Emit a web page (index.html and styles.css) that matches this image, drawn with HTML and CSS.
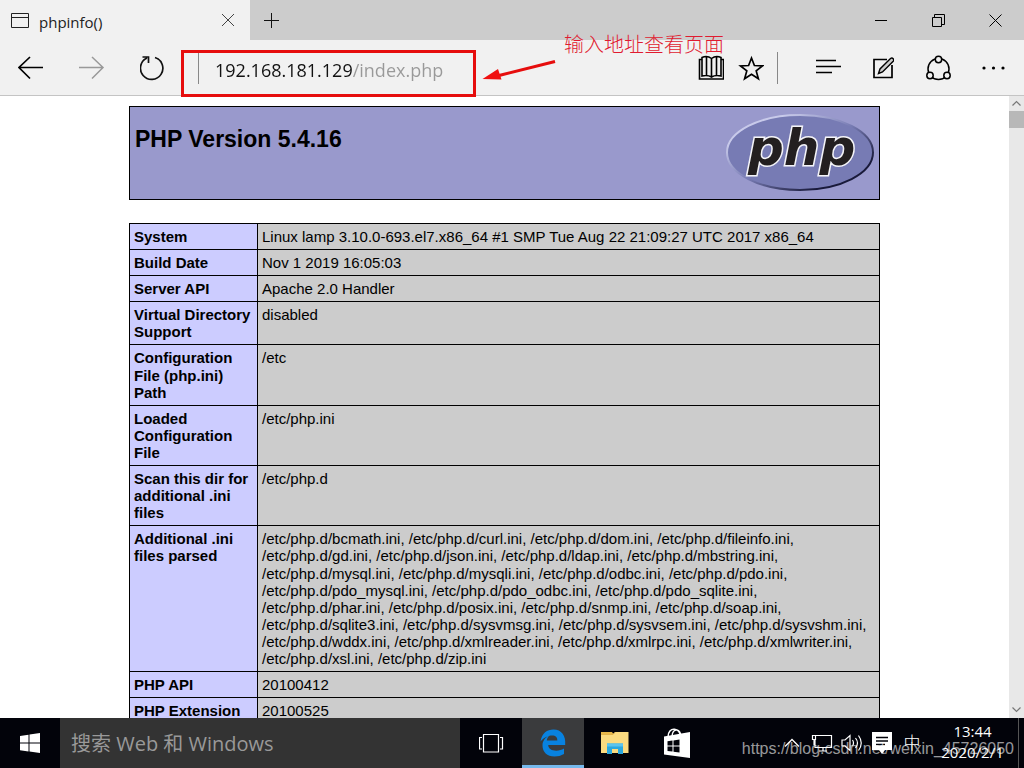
FILE: index.html
```html
<!DOCTYPE html>
<html lang="zh-CN">
<head>
<meta charset="utf-8">
<title>phpinfo()</title>
<link rel="stylesheet" href="styles.css">
</head>
<body>
<div class="titlebar">
  <div class="tab">
    <svg class="tab-icon" width="20" height="16" viewBox="10 11 20 16"><path d="M11.5 12.5h17v14h-17zM11.5 16.5h17" fill="none" stroke="#222"/></svg>
    <span class="tab-title">phpinfo()</span>
    <button class="tab-close" aria-label="Close tab"><svg width="14" height="14" viewBox="0 0 14 14"><path d="M1 1l12 12M13 1L1 13" stroke="#444" fill="none"/></svg></button>
  </div>
  <button class="tab-new" aria-label="New tab"><svg width="15" height="15" viewBox="0 0 15 15"><path d="M7.500 0v15M0 7.500h15" stroke="#111" fill="none"/></svg></button>
  <div class="window-controls">
    <button aria-label="Minimize"><svg width="13" height="13" viewBox="0 0 13 13"><path d="M0 6.500h12" stroke="#000"/></svg></button>
    <button aria-label="Restore"><svg width="13" height="13" viewBox="0 0 13 13"><path d="M.5 3.500h9v9h-9zM2.500 3.500v-3h10v10h-3" stroke="#000" fill="none"/></svg></button>
    <button aria-label="Close"><svg width="13" height="13" viewBox="0 0 13 13"><path d="M.5 .5l12 12M12.500 .5l-12 12" stroke="#000" fill="none"/></svg></button>
  </div>
</div>

<div class="toolbar">
  <button class="nav" aria-label="Back"><svg width="26" height="24" viewBox="18 56 26 24"><path d="M43 67.500H19M30 57L19 67.500L30 78.500" fill="none" stroke="#000" stroke-width="1.700"/></svg></button>
  <button class="nav" aria-label="Forward"><svg width="26" height="24" viewBox="79 56 26 24"><path d="M79 67.500h24M92 57l11 10.500L92 78.500" fill="none" stroke="#999" stroke-width="1.500"/></svg></button>
  <button class="nav" aria-label="Refresh"><svg width="26" height="26" viewBox="140 55 26 26"><path d="M155 57.500A11.200 11.200 0 1 1 147 58M142.500 57h6v6" fill="none" stroke="#111" stroke-width="1.700"/></svg></button>
  <div class="address">
    <input class="address-input" type="text" aria-label="Address" value="192.168.181.129/index.php">
    <span class="highlight"></span>
  </div>
  <button class="small" aria-label="Reading view"><svg width="26" height="26" viewBox="698 56 26 26"><path d="M702 60.500h-2.500v19.500h24V60.500H721M702 58.500c3-1.500 7-1 9.500 1 2.500-2 6.500-2.500 9.500-1V77c-4-1-7-.5-9.500 1-2.500-1.500-5.500-2-9.500-1zM711.500 59v19M706.500 58v18.500M716.500 58v18.500" fill="none" stroke="#000" stroke-width="1.600"/></svg></button>
  <button class="small" aria-label="Add to favorites"><svg width="26" height="26" viewBox="738 56 26 26"><path d="M751.500 59l2.900 7.500 8.100 .4-6.300 5 2.200 7.800-6.900-4.500-6.900 4.500 2.200-7.800-6.300-5 8.100-.4z" fill="none" stroke="#000" stroke-width="1.700"/></svg></button>
  <span class="divider"></span>
  <button class="menu" aria-label="Hub"><svg width="26" height="20" viewBox="815 58 26 20"><path d="M816 60.500h20M816 66.500h25M816 72.500h16" stroke="#000" stroke-width="1.500"/></svg></button>
  <button class="menu" aria-label="Web note"><svg width="22" height="24" viewBox="872 55 22 24"><path d="M887 58.500h-13v18h18V64" fill="none" stroke="#000" stroke-width="1.700"/><path d="M878.500 72.500l1.500-4.500 10.500-10.500q1.500-1 2.700 .3 1 1.200 0 2.500L882.500 71z" fill="#ccc" stroke="#000" stroke-width="1.400"/></svg></button>
  <button class="menu" aria-label="Share"><svg width="26" height="26" viewBox="925 54 26 26"><circle cx="938.500" cy="68" r="10.500" fill="none" stroke="#000" stroke-width="1.500"/><g fill="#f1f1f1" stroke="#000" stroke-width="1.500"><circle cx="938.500" cy="58.500" r="3.200"/><circle cx="930" cy="74.500" r="3.200"/><circle cx="947" cy="74.500" r="3.200"/></g></svg></button>
  <button class="menu" aria-label="More"><svg width="24" height="4" viewBox="0 0 24 4"><g fill="#000"><circle cx="3" cy="2" r="1.600"/><circle cx="12.500" cy="2" r="1.600"/><circle cx="22" cy="2" r="1.600"/></g></svg></button>
  <div class="note">
    <svg width="74" height="24" viewBox="481 59 74 24"><path d="M554 61.500L498 75.500" stroke="#e60d0d" stroke-width="3"/><path d="M481.500 79l15.500-10 3.500 10.500z" fill="#f01010"/></svg>
    <span>输入地址查看页面</span>
  </div>
</div>

<div class="viewport">
  <main class="page">
    <header class="banner">
      <h1>PHP Version 5.4.16</h1>
      <svg class="logo" width="150" height="80" viewBox="725 113 150 80" role="img" aria-label="php">
        <defs>
          <linearGradient id="rim" x1="0" y1="0" x2="1" y2="1"><stop offset=".2" stop-color="#c8caea"/><stop offset=".5" stop-color="#777bb3"/><stop offset=".8" stop-color="#191a3a"/></linearGradient>
        </defs>
        <ellipse cx="800" cy="152.500" rx="73" ry="37.500" fill="#777bb4" stroke="url(#rim)" stroke-width="2"/>
        <text class="logo-text" x="748" y="165">php</text>
      </svg>
    </header>
    <table class="info">
      <tr><th scope="row">System</th><td>Linux lamp 3.10.0-693.el7.x86_64 #1 SMP Tue Aug 22 21:09:27 UTC 2017 x86_64</td></tr>
      <tr><th scope="row">Build Date</th><td>Nov 1 2019 16:05:03</td></tr>
      <tr><th scope="row">Server API</th><td>Apache 2.0 Handler</td></tr>
      <tr><th scope="row">Virtual Directory Support</th><td>disabled</td></tr>
      <tr><th scope="row">Configuration File (php.ini) Path</th><td>/etc</td></tr>
      <tr><th scope="row">Loaded Configuration File</th><td>/etc/php.ini</td></tr>
      <tr><th scope="row">Scan this dir for additional .ini files</th><td>/etc/php.d</td></tr>
      <tr><th scope="row">Additional .ini files parsed</th><td>/etc/php.d/bcmath.ini, /etc/php.d/curl.ini, /etc/php.d/dom.ini, /etc/php.d/fileinfo.ini, /etc/php.d/gd.ini, /etc/php.d/json.ini, /etc/php.d/ldap.ini, /etc/php.d/mbstring.ini, /etc/php.d/mysql.ini, /etc/php.d/mysqli.ini, /etc/php.d/odbc.ini, /etc/php.d/pdo.ini, /etc/php.d/pdo_mysql.ini, /etc/php.d/pdo_odbc.ini, /etc/php.d/pdo_sqlite.ini, /etc/php.d/phar.ini, /etc/php.d/posix.ini, /etc/php.d/snmp.ini, /etc/php.d/soap.ini, /etc/php.d/sqlite3.ini, /etc/php.d/sysvmsg.ini, /etc/php.d/sysvsem.ini, /etc/php.d/sysvshm.ini, /etc/php.d/wddx.ini, /etc/php.d/xmlreader.ini, /etc/php.d/xmlrpc.ini, /etc/php.d/xmlwriter.ini, /etc/php.d/xsl.ini, /etc/php.d/zip.ini</td></tr>
      <tr><th scope="row">PHP API</th><td>20100412</td></tr>
      <tr><th scope="row">PHP Extension</th><td>20100525</td></tr>
    </table>
  </main>
  <div class="scrollbar">
    <svg width="15" height="15" viewBox="0 0 15 15"><path d="M3.500 9.500l4-4 4 4" fill="none" stroke="#777" stroke-width="1.200"/></svg>
    <span class="thumb"></span>
    <svg width="15" height="17" viewBox="0 0 15 17"><path d="M3.500 6.500l4 4 4-4" fill="none" stroke="#777" stroke-width="1.200"/></svg>
  </div>
</div>

<div class="taskbar">
  <button class="start" aria-label="Start"><svg width="20" height="20" viewBox="0 0 20 20"><path d="M0 2.900L8.500 1.700V9.500H0zM9.500 1.500L20 0v9.500H9.500zM0 10.500h8.500v7.900L0 17.200zM9.500 10.500H20V20L9.500 18.600z" fill="#fff"/></svg></button>
  <input class="search" type="text" aria-label="搜索" placeholder="搜索 Web 和 Windows">
  <button class="app" aria-label="Task view"><svg width="25" height="19" viewBox="0 0 25 19"><path d="M4.500 .5h15v17.500h-15zM3 3.500H.5v11.500H3M21 3.500h2.500v11.500H21" fill="none" stroke="#fff" stroke-width="1.200"/></svg></button>
  <button class="app active" aria-label="Microsoft Edge"><svg width="26" height="28" viewBox="540 729 26 28"><path d="M540.500 741.500C542 733 547 729.500 553.500 729.500c8 0 12.500 6 11.700 15.500h-17c.3 4 3.500 5.700 8 5.700 3 0 5.500-.8 7.800-2.200v5.500c-3 1.700-6 2.500-9.500 2.500-7.500 0-12-4.500-12-11 0-4.500 2.500-8 7-10-2 1.800-2.500 3.200-2.700 5h10.500c.2-3.500-1.800-5-5-5-4.800 0-8.800 2.500-11.800 6z" fill="#0882e0"/></svg></button>
  <button class="app" aria-label="File Explorer"><svg width="28" height="24" viewBox="0 0 28 24"><path d="M0 1h11l2 3H0z" fill="#e9b94a"/><path d="M0 3h12l2-2h13.500v21H0z" fill="#fbdb80"/><path d="M0 3.500h12l2-2" fill="none" stroke="#e2b34b"/><path d="M6 12.500h16V23h-5v-5h-6v5H6z" fill="#2ba8df"/><path d="M6 12.500h16v3H6z" fill="#5cc4ee"/></svg></button>
  <button class="app" aria-label="Store"><svg width="28" height="30" viewBox="0 0 28 30"><path d="M5 9C5 3.500 8 .8 11.500 1.200S17 4 17.500 8M9 8.500C9 4 11.500 1.500 14 2s3.500 3 4 6" fill="none" stroke="#fff" stroke-width="1.500"/><path d="M1 8.500L27 4v26L1 26.500z" fill="#fff"/><path d="M4.500 13.300l5-.7v5h-5zM10.500 12.400l6-.9v6h-6zM4.500 18.500h5v5l-5-.6zM10.500 18.500h6v6l-6-.8z" fill="#02030a"/></svg></button>
  <div class="tray">
    <button aria-label="Show hidden icons"><svg width="16" height="10" viewBox="0 0 16 10"><path d="M1 8.500L8 1.500l7 7" fill="none" stroke="#fff" stroke-width="1.300"/></svg></button>
    <button aria-label="Network"><svg width="22" height="18" viewBox="0 0 22 18"><path d="M5 1.500h15.500v12H4V6M12 14v3M8 17h8M1.500 1.500h3v4h-3zM3 5.500V11" fill="none" stroke="#fff" stroke-width="1.200"/></svg></button>
    <button aria-label="Volume"><svg width="22" height="20" viewBox="0 0 22 20"><path d="M1 7h3l5-4.500v15L4 13H1zM11.500 7q2 3 0 6M14.500 5q4 5 0 10M17.500 2.500q5.500 7.500 0 15" fill="none" stroke="#fff" stroke-width="1.200"/></svg></button>
    <button aria-label="Notifications"><svg width="20" height="22" viewBox="0 0 20 22"><path d="M0 0h20v18h-7l-3 4-3-4H0z" fill="#fff"/><path d="M4 5.500h12M4 9h12M4 12.500h9" stroke="#02030a" stroke-width="1.300"/></svg></button>
    <button class="ime">中</button>
  </div>
  <button class="clock"><span>13:44</span><span>2020/2/1</span></button>
  <span class="show-desktop"></span>
  <span class="watermark">https://blog.csdn.net/weixin_45726050</span>
</div>
</body>
</html>
```
FILE: styles.css
```css
* {
  box-sizing: border-box;
}

body {
  margin: 0;
  height: 100vh;
  display: flex;
  flex-direction: column;
  overflow: hidden;
  background: #fff;
  color: #000;
  font-family: "Open Sans", "Noto Sans CJK SC", sans-serif;
}

button {
  display: flex;
  align-items: center;
  justify-content: center;
  padding: 0;
  border: 0;
  background: none;
  color: inherit;
  font: inherit;
}

/* Tab strip */
.titlebar {
  flex: none;
  display: flex;
  height: 40px;
  background: #ccc;
}

.tab {
  display: flex;
  align-items: center;
  width: 250px;
  padding: 0 14px 0 10px;
  background: #f1f1f1;
}

.tab-title {
  flex: 1;
  padding: 3px 0 0 9px;
  font-size: 15px;
  color: #222;
}

.tab-close {
  width: 16px;
  height: 40px;
}

.tab-new {
  width: 43px;
}

.window-controls {
  display: flex;
  margin-left: auto;
}

.window-controls button {
  width: 57px;
}

/* Navigation bar */
.toolbar {
  flex: none;
  position: relative;
  display: flex;
  align-items: center;
  height: 56px;
  padding: 1px 4px 0 0;
  background: #f1f1f1;
  border-bottom: 1px solid #c4c4c4;
}

.nav {
  width: 61px;
  height: 54px;
}

.address {
  flex: 1;
  position: relative;
  display: flex;
  margin-left: 15px;
  border-left: 1px solid #888;
}

.address-input {
  width: 100%;
  height: 32px;
  padding: 3px 0 0 16px;
  border: 0;
  outline: 0;
  background: linear-gradient(90deg, #111 153px, #999 153px);
  background-clip: text;
  -webkit-background-clip: text;
  color: transparent;
  font: 18px "Open Sans", sans-serif;
}

.highlight {
  position: absolute;
  left: -18px;
  top: -2px;
  width: 295px;
  height: 47px;
  border: 3px solid #e60d0d;
  pointer-events: none;
}

.small {
  width: 40px;
  height: 54px;
}

.divider {
  width: 1px;
  height: 32px;
  margin: 0 22px 0 6px;
  background: #888;
}

.menu {
  width: 55px;
  height: 54px;
}

.note {
  position: absolute;
  left: 482px;
  top: -10px;
  display: flex;
  align-items: flex-end;
  gap: 8px;
  height: 53px;
  color: #e01b30;
  pointer-events: none;
}

.note span {
  align-self: flex-start;
  font: 300 20px/28px "Noto Sans CJK SC", sans-serif;
}

/* Document */
.viewport {
  flex: 1;
  min-height: 0;
  display: flex;
}

.page {
  flex: 1;
  overflow: hidden;
  padding-top: 10px;
  font-family: "Liberation Sans", Arial, sans-serif;
}

.banner {
  display: flex;
  justify-content: space-between;
  align-items: flex-start;
  width: 100%;
  max-width: 751px;
  height: 94px;
  margin: 0 auto 23px;
  padding: 6px 4px 0 5px;
  background: #9999cc;
  border: 1px solid #000;
}

.banner h1 {
  margin: 12px 0 0;
  font-size: 23px;
  line-height: 28px;
}

.logo-text {
  font: italic bold 50px "DejaVu Sans", sans-serif;
  fill: #231f20;
  stroke: #f4f4f8;
  stroke-width: 3px;
  stroke-linejoin: miter;
  paint-order: stroke;
}

.info {
  width: 100%;
  max-width: 751px;
  margin: 0 auto;
  border-collapse: collapse;
  font-size: 15px;
  line-height: 1.14;
}

.info th,
.info td {
  padding: 4px;
  border: 1px solid #000;
  text-align: left;
  vertical-align: top;
}

.info th {
  width: 128px;
  background: #ccccff;
}

.info td {
  background: #ccc;
}

.scrollbar {
  display: flex;
  flex-direction: column;
  width: 15px;
  background: #e8e8e8;
}

.thumb {
  height: 17px;
  margin-bottom: auto;
  background: #b8b8b8;
}

/* Taskbar */
.taskbar {
  flex: none;
  position: relative;
  display: flex;
  height: 50px;
  background: #02030a;
  color: #fff;
}

.start {
  width: 60px;
}

.search {
  width: 400px;
  padding: 0 11px;
  border: 0;
  outline: 0;
  background: #333;
  color: #fff;
  font: 20px "Open Sans", "Noto Sans CJK SC", sans-serif;
}

.search::placeholder {
  color: #999;
  opacity: 1;
}

.app {
  width: 62px;
}

.app.active {
  background: #3a3b3d;
  border-bottom: 3px solid #76b9ed;
  padding-top: 3px;
}

.tray {
  display: flex;
  margin-left: auto;
}

.tray button {
  width: 30px;
}

.tray .ime {
  padding-bottom: 3px;
  font: 300 17px "Noto Sans CJK SC", sans-serif;
}

.clock {
  flex-direction: column;
  width: 91px;
  padding-bottom: 3px;
  font-size: 15px;
  line-height: 21px;
}

.show-desktop {
  width: 6px;
  border-left: 1px solid #555;
}

.watermark {
  position: absolute;
  right: 10px;
  bottom: 9px;
  font: 16px/20px "Liberation Sans", Arial, sans-serif;
  color: rgba(255, 255, 255, 0.6);
  pointer-events: none;
}
```
